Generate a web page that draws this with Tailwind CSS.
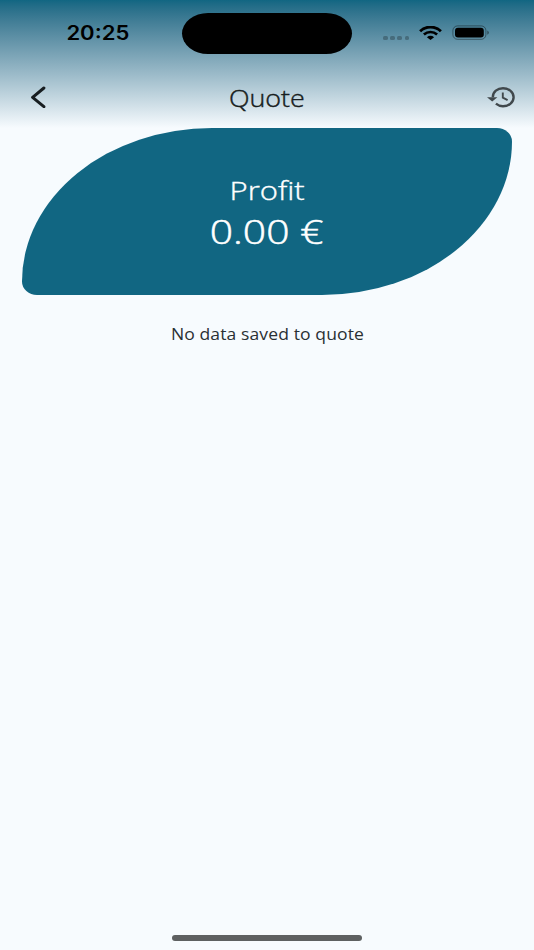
<!DOCTYPE html>
<html lang="en">
<head>
    <meta charset="UTF-8">
    <meta name="viewport" content="width=device-width, initial-scale=1.0">
    <title>Quote</title>
    <!-- Tailwind CSS CDN -->
    <script src="https://cdn.jsdelivr.net/npm/@tailwindcss/browser@4"></script>
</head>
<body class="h-[950px] w-[534px] overflow-hidden bg-[#f7fbfe] font-['Open_Sans',sans-serif]">
    <div class="flex h-full flex-col">
        <!-- Header with gradient -->
        <div class="h-[128px] shrink-0 bg-linear-to-b from-[#116682] to-[#f7fbfe]">
            <!-- Status bar -->
            <div class="grid h-[66px] grid-cols-[182px_170px_182px] items-center">
                <div class="flex justify-center pl-[13px]">
                    <span class="inline-block scale-x-[1.13] font-['Inter',sans-serif] text-[19.5px] leading-6 font-semibold text-black">20:25</span>
                </div>
                <div class="h-[41px] rounded-[26px/20.5px] bg-black"></div>
                <div class="flex items-center pl-[31px]">
                    <div class="mt-[10px] flex gap-[2.4px]">
                        <span class="h-1 w-[4.8px] rounded-[1.6px] bg-black/25"></span>
                        <span class="h-1 w-[4.8px] rounded-[1.6px] bg-black/25"></span>
                        <span class="h-1 w-[4.8px] rounded-[1.6px] bg-black/25"></span>
                        <span class="h-1 w-[4.8px] rounded-[1.6px] bg-black/25"></span>
                    </div>
                    <svg class="-mt-px ml-[10px] h-[14px] w-[23px]" viewBox="0 0 23 14" fill="none" stroke="#000">
                        <path d="M1.1 5.2C7 -.3 16 -.3 21.9 5.2" stroke-width="2.9" />
                        <path d="M4.9 8.6C8.8 5.1 14.2 5.1 18.1 8.6" stroke-width="2.7" />
                        <path d="M11.5 13.9L7.9 11.2C10 9.4 13 9.4 15.1 11.2Z" fill="#000" stroke="none" />
                    </svg>
                    <svg class="-mt-px ml-[9.5px] h-[15px] w-[38px]" viewBox="0 0 38 15">
                        <rect x=".9" y=".9" width="33" height="13.4" rx="4.6" fill="none" stroke="#000" stroke-opacity=".4" />
                        <rect x="3" y="2.8" width="28.8" height="9.7" rx="3" fill="#000" />
                        <path d="M35.4 5.5c1.9.8 1.9 3.4 0 4.2z" fill="#000" fill-opacity=".5" />
                    </svg>
                </div>
            </div>
            <!-- Navigation bar -->
            <div class="grid h-[62px] grid-cols-[1fr_auto_1fr] items-center px-[17px]">
                <button aria-label="Back" class="ml-[13px] h-[22px] w-4 justify-self-start">
                    <svg class="h-[22px] w-4" viewBox="0 0 16 22" fill="none" stroke="#171d20" stroke-width="3" stroke-linecap="round" stroke-linejoin="round">
                        <path d="M13.9 2L2.6 11.4L13.9 20.7" />
                    </svg>
                </button>
                <h1 class="mt-px scale-x-[1.12] text-[24px] leading-8 font-light text-[#171d20] [-webkit-text-stroke:0.4px_#171d20]">Quote</h1>
                <button aria-label="History" class="h-[24px] w-[30px] justify-self-end">
                    <svg class="h-[24px] w-[30px]" viewBox="0 0 30 24" fill="none" stroke="#40484c">
                        <path d="M5.8 12.3C5.8 6.8 10.5 3.2 16 3.2C22 3.2 26.6 7.2 26.6 12.2C26.6 17.2 22 21.2 16 21.2C13.2 21.2 10.8 20.3 8.9 18.7" stroke-width="2.4" />
                        <path d="M0 12.2H10.4L5.2 16.5Z" fill="#40484c" stroke="none" />
                        <path d="M15.8 7.5V12.7L20.6 15.2" stroke-width="1.9" />
                    </svg>
                </button>
            </div>
        </div>

        <!-- Profit card -->
        <div class="mx-[22px] mt-[0.4px] flex h-[167px] shrink-0 flex-col items-center rounded-[190px_15px_190px_15px/153.5px_13.5px_153.5px_13.5px] bg-[#116682] pt-[44px] text-white">
            <p class="scale-x-[1.17] text-[26.5px] leading-9 font-light [-webkit-text-stroke:0.4px_white]">Profit</p>
            <p class="mt-px scale-x-[1.22] text-[33.5px] leading-[44px] font-light [-webkit-text-stroke:0.5px_white]">0.00 €</p>
        </div>

        <!-- Empty state -->
        <div class="mt-[27px] flex justify-center">
            <p class="scale-x-[1.13] text-[15.5px] leading-6 tracking-[0.1px] text-[#2a3033]">No data saved to quote</p>
        </div>

        <!-- Home indicator -->
        <div class="mx-auto mt-auto mb-[9px] h-[6px] w-[190px] rounded-full bg-[#5e6061]"></div>
    </div>
</body>
</html>
